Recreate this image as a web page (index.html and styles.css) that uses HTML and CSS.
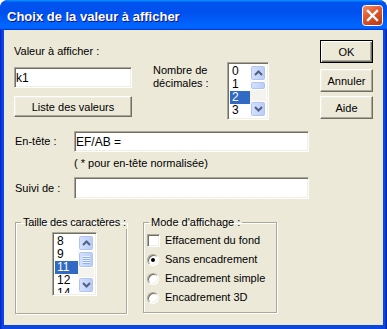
FILE: index.html
```html
<!DOCTYPE html>
<html lang="fr">
  <head>
    <meta charset="UTF-8" />
    <title>Choix de la valeur à afficher</title>
    <link rel="stylesheet" href="styles.css">
  </head>
  <body>
    <div class="window">
      <div class="titlebar">
        <span class="title">Choix de la valeur à afficher</span>
        <svg class="close" width="21" height="21" viewBox="0 0 21 21">
          <defs>
            <linearGradient id="red" x1="0" y1="0" x2="0.6" y2="1">
              <stop offset="0" stop-color="#F0906E" />
              <stop offset="0.5" stop-color="#E1582F" />
              <stop offset="1" stop-color="#C23A17" />
            </linearGradient>
          </defs>
          <rect x="0.5" y="0.5" width="20" height="20" rx="3" fill="url(#red)" stroke="#fff" />
          <path d="M6 6 L15 15 M15 6 L6 15" stroke="#fff" stroke-width="2.4" stroke-linecap="square" />
        </svg>
      </div>
      <div class="frame">
        <div class="client">
          <div class="top">
            <div class="col-value">
              <div class="label">Valeur à afficher :</div>
              <input class="edit value-edit" type="text" value="k1" />
              <button class="btn list-btn">Liste des valeurs</button>
            </div>
            <div class="col-dec">
              <div class="dec-label">Nombre de<br />décimales :</div>
              <div class="listbox dec-list">
                <div class="items">
                  <div class="item">0</div>
                  <div class="item">1</div>
                  <div class="item selected">2</div>
                  <div class="item">3</div>
                  <div class="item">4</div>
                </div>
                <div class="scrollbar">
                  <div class="sb-btn">
                    <svg width="9" height="6" viewBox="0 0 9 6"><path d="M1 5 L4.5 1.5 L8 5" fill="none" stroke="#4D6185" stroke-width="2" /></svg>
                  </div>
                  <div class="sb-thumb dec-thumb"></div>
                  <div class="sb-track"></div>
                  <div class="sb-btn">
                    <svg width="9" height="6" viewBox="0 0 9 6"><path d="M1 1 L4.5 4.5 L8 1" fill="none" stroke="#4D6185" stroke-width="2" /></svg>
                  </div>
                </div>
              </div>
            </div>
            <div class="col-buttons">
              <button class="btn side-btn default">OK</button>
              <button class="btn side-btn">Annuler</button>
              <button class="btn side-btn">Aide</button>
            </div>
          </div>

          <div class="fields">
            <div class="field-label">En-tête :</div>
            <input class="edit wide-edit" type="text" value="EF/AB =" />
            <div></div>
            <div class="hint">( * pour en-tête normalisée)</div>
            <div class="field-label">Suivi de :</div>
            <input class="edit wide-edit suivi" type="text" value="" />
          </div>

          <div class="groups">
            <fieldset class="group size-group">
              <legend>Taille des caractères :</legend>
              <div class="listbox size-list">
                <div class="items">
                  <div class="item">8</div>
                  <div class="item">9</div>
                  <div class="item selected">11</div>
                  <div class="item">12</div>
                  <div class="item">14</div>
                </div>
                <div class="scrollbar">
                  <div class="sb-btn">
                    <svg width="9" height="6" viewBox="0 0 9 6"><path d="M1 5 L4.5 1.5 L8 5" fill="none" stroke="#4D6185" stroke-width="2" /></svg>
                  </div>
                  <div class="sb-thumb size-thumb">
                    <span class="grip"></span><span class="grip"></span><span class="grip"></span><span class="grip"></span>
                  </div>
                  <div class="sb-track"></div>
                  <div class="sb-btn">
                    <svg width="9" height="6" viewBox="0 0 9 6"><path d="M1 1 L4.5 4.5 L8 1" fill="none" stroke="#4D6185" stroke-width="2" /></svg>
                  </div>
                </div>
              </div>
            </fieldset>
            <fieldset class="group mode-group">
              <legend>Mode d'affichage :</legend>
              <div class="option first">
                <span class="check"></span>
                <span>Effacement du fond</span>
              </div>
              <div class="option">
                <span class="radio on"></span>
                <span>Sans encadrement</span>
              </div>
              <div class="option">
                <span class="radio"></span>
                <span>Encadrement simple</span>
              </div>
              <div class="option">
                <span class="radio"></span>
                <span>Encadrement 3D</span>
              </div>
            </fieldset>
          </div>
        </div>
      </div>
    </div>
  </body>
</html>
```

FILE: styles.css
```css
body {
  margin: 0;
  background: #fff;
  font-family: "Liberation Sans", Arial, sans-serif;
  font-size: 11px;
  line-height: 13px;
  color: #000;
}
.window {
  width: 387px;
  height: 329px;
  display: flex;
  flex-direction: column;
  border-radius: 8px 8px 0 0;
  overflow: hidden;
  background: #0831D9;
}
.titlebar {
  height: 30px;
  flex: none;
  display: flex;
  align-items: flex-start;
  justify-content: space-between;
  background: linear-gradient(to bottom, #0997FF 0%, #0053EE 8%, #0050EE 40%, #0066FF 88%, #0066FF 93%, #005BFF 95%, #003DD7 96%, #003DD7 100%);
}
.title {
  padding: 9px 0 0 7px;
  font-size: 13px;
  line-height: 15px;
  font-weight: bold;
  color: #fff;
  text-shadow: 1px 1px #0F1089;
}
.close {
  margin: 5px 4px 0 0;
}
.frame {
  flex: 1;
  padding: 0 4px 4px;
  background: linear-gradient(to right, #0019CF, #0A46DF 2px, #0A46DF calc(100% - 2px), #001EA0);
}
.client {
  height: 100%;
  background: #ECE9D8;
  padding-left: 10px;
  box-sizing: border-box;
}

/* controls */
.edit {
  box-sizing: border-box;
  height: 21px;
  margin: 0;
  padding: 0 1px;
  background: #fff;
  border: 1px solid;
  border-color: #ACA899 #fff #fff #ACA899;
  box-shadow: inset 1px 1px #716F64, inset -1px -1px #F1EFE2;
  font-family: "Liberation Sans", Arial, sans-serif;
  font-size: 12px;
  color: #000;
  outline: none;
}
.btn {
  box-sizing: border-box;
  margin: 0;
  padding: 0;
  background: #ECE9D8;
  border: 1px solid;
  border-color: #fff #716F64 #716F64 #fff;
  box-shadow: inset -1px -1px #ACA899, inset 1px 1px #F1EFE2;
  font-family: "Liberation Sans", Arial, sans-serif;
  font-size: 11px;
  color: #000;
}
.btn.default {
  border-color: #000;
  box-shadow: inset 1px 1px #fff, inset -1px -1px #716F64, inset -2px -2px #ACA899;
}
.listbox {
  box-sizing: border-box;
  display: flex;
  background: #fff;
  border: 1px solid;
  border-color: #ACA899 #fff #fff #ACA899;
  box-shadow: inset 1px 1px #716F64, inset -1px -1px #F1EFE2;
  padding: 2px;
  overflow: hidden;
}
.items {
  flex: 1;
  overflow: hidden;
  font-size: 12px;
  line-height: 13px;
}
.item {
  height: 13px;
  padding-left: 2px;
}
.item.selected {
  background: #316AC5;
  color: #fff;
}
.scrollbar {
  width: 16px;
  flex: none;
  display: flex;
  flex-direction: column;
  background: #F4F3EE;
}
.sb-btn,
.sb-thumb {
  box-sizing: border-box;
  border: 1px solid #fff;
  border-radius: 3px;
  background: linear-gradient(to right, #D6E2FD, #BACBF6);
  box-shadow: inset 0 0 0 1px #B0C4F0;
}
.sb-btn {
  height: 16px;
  display: flex;
  align-items: center;
  justify-content: center;
}
.dec-thumb {
  height: 9px;
}
.size-thumb {
  height: 17px;
  display: flex;
  flex-direction: column;
  align-items: center;
  justify-content: center;
  gap: 1px;
}
.grip {
  width: 7px;
  height: 1px;
  background: #EEF4FE;
  box-shadow: 0 1px #8CB0F8;
}
.sb-track {
  flex: 1;
}

/* top section */
.top {
  display: flex;
  align-items: flex-start;
}
.col-value {
  width: 118px;
  padding-top: 15px;
  display: flex;
  flex-direction: column;
}
.value-edit {
  margin-top: 9px;
  width: 118px;
}
.list-btn {
  margin-top: 8px;
  height: 21px;
}
.col-dec {
  margin-left: 21px;
  padding-top: 32px;
  display: flex;
}
.dec-label {
  width: 74px;
  padding-top: 2px;
}
.dec-list {
  width: 42px;
  height: 58px;
}
.col-buttons {
  margin-left: 51px;
  padding-top: 10px;
  display: flex;
  flex-direction: column;
}
.side-btn {
  width: 53px;
  height: 23px;
  margin-top: 4px;
}
.side-btn.default {
  margin-top: 0;
  margin-bottom: 2px;
}

/* header fields */
.fields {
  margin-top: 11px;
  padding-left: 1px;
  display: grid;
  grid-template-columns: 59px 235px;
  align-items: center;
}
.wide-edit {
  width: 235px;
}
.hint {
  margin: 5px 0 7px;
}
.suivi {
  height: 22px;
}

/* group boxes */
.groups {
  margin-top: 17px;
  padding-left: 1px;
  display: flex;
  gap: 16px;
}
.group {
  box-sizing: border-box;
  min-width: 0;
  margin: 0;
  padding: 0 3px;
  height: 98px;
  border: 1px solid #ACA899;
  box-shadow: inset 1px 1px #fff, 1px 1px #fff;
}
.group legend {
  margin-left: 2px;
  padding: 0 2px;
  line-height: 13px;
  white-space: nowrap;
}
.size-group legend {
  letter-spacing: -0.15px;
}
.size-group {
  width: 112px;
  flex: none;
}
.size-list {
  margin: 3px 0 0 33px;
  width: 45px;
  height: 64px;
}
.mode-group {
  width: 134px;
  flex: none;
  height: 97px;
}
.option {
  height: 19px;
  display: flex;
  align-items: center;
  gap: 5px;
}
.option.first {
  margin-top: 1px;
  height: 20px;
}
.check,
.radio {
  box-sizing: border-box;
  flex: none;
  background: #fff;
  border: 1px solid;
  border-color: #ACA899 #fff #fff #ACA899;
  box-shadow: inset 1px 1px #716F64, inset -1px -1px #F1EFE2;
}
.check {
  width: 13px;
  height: 13px;
}
.radio {
  width: 12px;
  height: 12px;
  margin-right: 1px;
  border-radius: 50%;
  display: flex;
  align-items: center;
  justify-content: center;
}
.radio.on::after {
  content: "";
  width: 4px;
  height: 4px;
  border-radius: 50%;
  background: #000;
}
```
